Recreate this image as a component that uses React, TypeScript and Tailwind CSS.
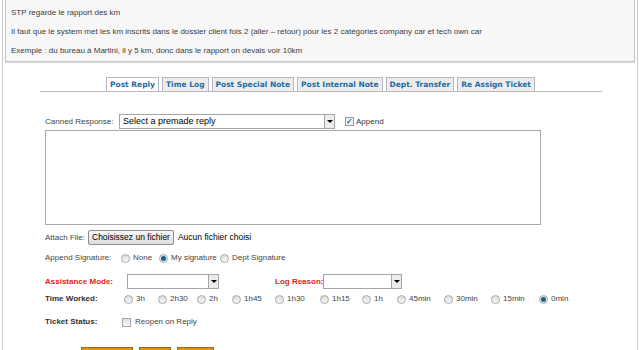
const Radio = ({ checked = false }: { checked?: boolean }) => (
    <span className="flex h-[9px] w-[9px] shrink-0 items-center justify-center rounded-full border border-[#a9a9a9] bg-gradient-to-b from-[#dcdcdc] to-[#f8f8f8]">
        {checked && <span className="h-[5px] w-[5px] rounded-full bg-[#1d5f8f]" />}
    </span>
);

const Select = ({ w, text = '' }: { w: string; text?: string }) => (
    <div className={`flex h-[15px] shrink-0 items-center justify-between border border-[#a5a5a5] bg-white ${w}`}>
        <span className="pl-[3px] text-[9px] font-normal text-black">{text}</span>
        <span className="flex h-[13px] w-[10px] items-center justify-center border-l border-[#a5a5a5] bg-[#ececec]">
            <span className="h-0 w-0 border-x-[3px] border-t-[3px] border-x-transparent border-t-black" />
        </span>
    </div>
);

const Tab = ({ label, active = false }: { label: string; active?: boolean }) => (
    <div
        className={`flex h-[14px] items-center border border-b-0 border-[#b7b7c4] px-[3px] text-[7.5px] font-bold whitespace-nowrap text-[#1b6aa5] ${
            active ? 'bg-white' : 'bg-[#ededed]'
        }`}
    >
        {label}
    </div>
);

const times = ['3h', '2h30', '2h', '1h45', '1h30', '1h15', '1h', '45min', '30min', '15min', '0min'];
const timeW = ['w-[34px]', 'w-[39px]', 'w-[35px]', 'w-[43px]', 'w-[45px]', 'w-[42px]', 'w-[35px]', 'w-[47px]', 'w-[47px]', 'w-[48px]', 'w-[40px]'];

export default function App() {
    return (
        <div className="h-[350px] w-[640px] overflow-hidden bg-white font-['Liberation_Sans',Arial,sans-serif]">
            <div className="ml-[2px] h-full w-[636px] border-x border-[#c9c9c9]">
                {/* message */}
                <div className="ml-[2px] w-[630px] border border-t-0 border-[#c8c8c8] bg-[#f7f7f7] pl-[5px] text-[8px] leading-[19px] text-[#3c3c3c] shadow-[0_1px_1px_rgba(0,0,0,0.15)]">
                    <div className="pt-[3px]">STP regarde le rapport des km</div>
                    <div>Il faut que le system met les km inscrits dans le dossier client fois 2 (aller – retour) pour les 2 catégories company car et tech own car</div>
                    <div className="pb-[1px]">Exemple : du bureau à Martini, il y 5 km, donc dans le rapport on devais voir 10km</div>
                </div>

                {/* tabs */}
                <div className="mt-[15px] ml-[37px] flex w-[562px] gap-[3px] border-b border-[#b7b7c4] pl-[66px] font-['DejaVu_Sans',Verdana,sans-serif]">
                    <Tab label="Post Reply" active />
                    <Tab label="Time Log" />
                    <Tab label="Post Special Note" />
                    <Tab label="Post Internal Note" />
                    <Tab label="Dept. Transfer" />
                    <Tab label="Re Assign Ticket" />
                </div>

                <div className="mt-[22px] ml-[42px] text-[8px] text-[#444]">
                    <div className="flex items-center">
                        <span className="w-[74px]">Canned Response:</span>
                        <Select w="w-[216px]" text="Select a premade reply" />
                        <span className="ml-[10px] flex h-[9px] w-[9px] items-center justify-center border border-[#9a9a9a] bg-[#eef2f6] text-[8px] leading-none font-bold text-[#1f5f99]">
                            ✓
                        </span>
                        <span className="ml-[2px] text-[#333]">Append</span>
                    </div>
                    <div className="mt-[1px] h-[95px] w-[496px] border border-[#a9a9a9] bg-white" />
                    <div className="mt-[5px] flex items-center">
                        <span className="w-[43px]">Attach File:</span>
                        <span className="flex h-[15px] items-center rounded-[2px] border border-[#8d8d8d] bg-gradient-to-b from-[#f6f6f6] to-[#dedede] px-[3px] text-[8.5px] text-black">
                            Choisissez un fichier
                        </span>
                        <span className="ml-[4px] text-[8.5px] text-black">Aucun fichier choisi</span>
                    </div>
                    <div className="mt-[6px] flex h-[14px] items-center">
                        <span className="w-[76px]">Append Signature:</span>
                        <Radio />
                        <span className="ml-[3px] w-[26px]">None</span>
                        <Radio checked />
                        <span className="ml-[3px] w-[49px]">My signature</span>
                        <Radio />
                        <span className="ml-[3px]">Dept Signature</span>
                    </div>
                    <div className="mt-[9px] flex h-[15px] items-center font-bold whitespace-nowrap">
                        <span className="w-[82px] text-[#e31b1b]">Assistance Mode:</span>
                        <Select w="w-[92px]" />
                        <span className="ml-[56px] w-[48px] text-[#e31b1b]">Log Reason:</span>
                        <Select w="w-[79px]" />
                    </div>
                    <div className="mt-[3px] flex h-[14px] items-center">
                        <span className="w-[79px] font-bold text-[#333]">Time Worked:</span>
                        {times.map((t, i) => (
                            <span key={t} className={`flex items-center ${timeW[i]}`}>
                                <Radio checked={t === '0min'} />
                                <span className="ml-[3px]">{t}</span>
                            </span>
                        ))}
                    </div>
                    <div className="mt-[9px] flex h-[14px] items-center">
                        <span className="w-[77px] font-bold text-[#333]">Ticket Status:</span>
                        <span className="h-[9px] w-[9px] border border-[#a5a5a5] bg-gradient-to-b from-[#e2e2e2] to-[#fafafa]" />
                        <span className="ml-[4px]">Reopen on Reply</span>
                    </div>
                    <div className="mt-[18px] ml-[36px] flex gap-[6px] text-[8px] font-bold text-[#222]">
                        <span className="flex h-[14px] w-[52px] justify-center border border-[#9c6a10] bg-[#e0950f]">Post Reply</span>
                        <span className="flex h-[14px] w-[32px] justify-center border border-[#9c6a10] bg-[#e0950f]">Reset</span>
                        <span className="flex h-[14px] w-[37px] justify-center border border-[#9c6a10] bg-[#e0950f]">Cancel</span>
                    </div>
                </div>
            </div>
        </div>
    );
}
